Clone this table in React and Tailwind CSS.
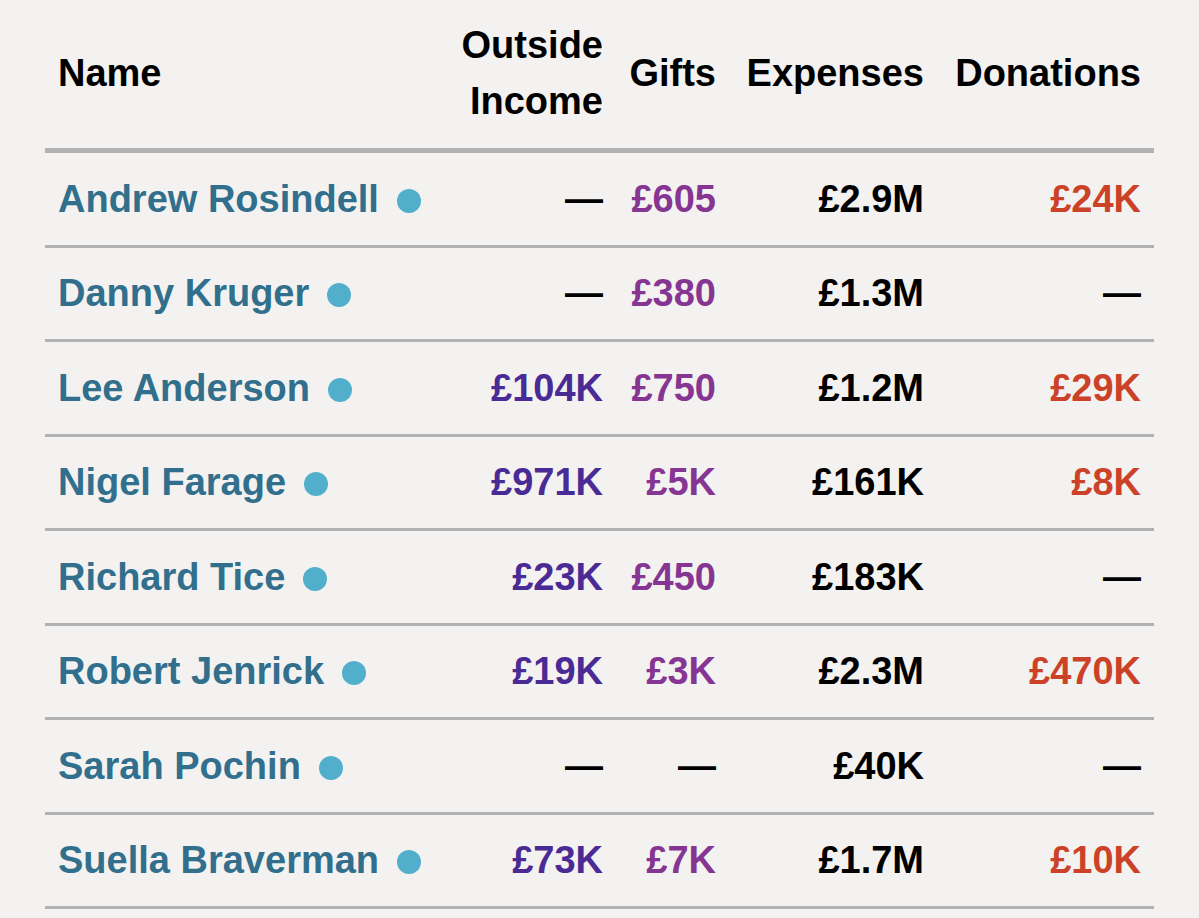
const rows = [
  { name: 'Andrew Rosindell', outside: null, gifts: '£605', expenses: '£2.9M', donations: '£24K' },
  { name: 'Danny Kruger', outside: null, gifts: '£380', expenses: '£1.3M', donations: null },
  { name: 'Lee Anderson', outside: '£104K', gifts: '£750', expenses: '£1.2M', donations: '£29K' },
  { name: 'Nigel Farage', outside: '£971K', gifts: '£5K', expenses: '£161K', donations: '£8K' },
  { name: 'Richard Tice', outside: '£23K', gifts: '£450', expenses: '£183K', donations: null },
  { name: 'Robert Jenrick', outside: '£19K', gifts: '£3K', expenses: '£2.3M', donations: '£470K' },
  { name: 'Sarah Pochin', outside: null, gifts: null, expenses: '£40K', donations: null },
  { name: 'Suella Braverman', outside: '£73K', gifts: '£7K', expenses: '£1.7M', donations: '£10K' },
];

const cols = 'grid grid-cols-[403px_169px_113px_208px_216px]';

const Value = ({ v, color }) => (
  <span className={v ? color : 'text-black'}>{v || '—'}</span>
);

const App = () => {
  return (
    <div
      className="min-h-screen w-full bg-[#f3f2f0] text-[38px] font-bold leading-[56px]"
      style={{ fontFamily: '"Liberation Sans", Arial, sans-serif' }}
    >
      <div className="ml-[45px] w-[1109px]">
        <div className={`${cols} h-[153px] items-center border-b-[5px] border-[#b2b2b2] pb-[2px] text-black`}>
          <div className="pl-[13px]">Name</div>
          <div className="pr-[14px] text-right">Outside<br />Income</div>
          <div className="pr-[14px] text-right">Gifts</div>
          <div className="pr-[14px] text-right">Expenses</div>
          <div className="pr-[13px] text-right">Donations</div>
        </div>

        {rows.map((r) => (
          <div key={r.name} className={`${cols} h-[94.5px] items-center border-b-[3px] border-[#b2b2b2]`}>
            <div className="flex items-center gap-[18px] pl-[13px] text-[#316f8d]">
              <span>{r.name}</span>
              <span className="mt-[4px] h-[24px] w-[24px] rounded-full bg-[#52afcc]" />
            </div>
            <div className="pr-[14px] text-right">
              <Value v={r.outside} color="text-[#4a2a94]" />
            </div>
            <div className="pr-[14px] text-right">
              <Value v={r.gifts} color="text-[#863692]" />
            </div>
            <div className="pr-[14px] text-right text-black">{r.expenses}</div>
            <div className="pr-[13px] text-right">
              <Value v={r.donations} color="text-[#cc4229]" />
            </div>
          </div>
        ))}
      </div>
    </div>
  );
};

export default App;
